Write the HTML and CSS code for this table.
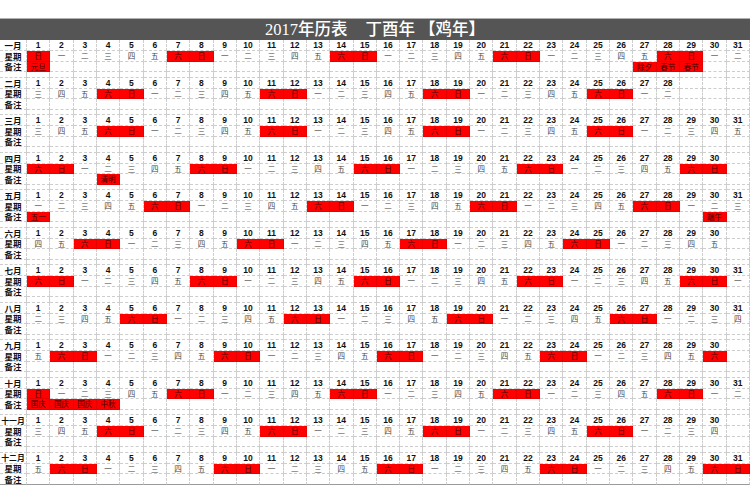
FILE: index.html
```
<!DOCTYPE html>
<html lang="zh">
<head>
<meta charset="utf-8">
<title>2017年历表</title>
<link rel="stylesheet" href="styles.css">
</head>
<body>
<div class="page">
  <div class="title">2017年历表<span class="sp"></span>丁酉年 【鸡年】</div>
  <div id="cal" class="cal"></div>
</div>
<script src="script.js"></script>
</body>
</html>
```

FILE: styles.css
```
html, body {
  margin: 0;
  padding: 0;
  background: #fff;
}
body {
  width: 750px;
  height: 501px;
  overflow: hidden;
  font-family: "Liberation Sans", "Noto Sans CJK SC", sans-serif;
}
.page {
  padding-top: 18px;
}
.title {
  height: 21px;
  border-top: 1px solid #b0b0b0;
  background: #555555;
  color: #fff;
  text-align: center;
  font-family: "Liberation Serif", "Noto Sans CJK SC", serif;
  font-size: 16.5px;
  font-weight: 500;
  line-height: 21px;
}
.title .sp {
  display: inline-block;
  width: 18px;
}
.month, .gap {
  display: grid;
  grid-template-columns: 27px repeat(31, 1fr);
}
.month {
  grid-template-rows: 11px 10.5px 10.5px;
}
.gap {
  grid-template-rows: 5.5px;
}
.c {
  box-sizing: border-box;
  border-right: 1px dashed #cdcdcd;
  border-bottom: 1px dashed #cdcdcd;
  display: flex;
  align-items: center;
  justify-content: center;
  overflow: hidden;
  white-space: nowrap;
}
.lab {
  font-family: "Noto Sans CJK SC", sans-serif;
  font-weight: 700;
  font-size: 8.5px;
  color: #111;
}
.lab.m3 {
  font-size: 7.8px;
}
.num {
  font-weight: 700;
  font-size: 8.5px;
  color: #111;
}
.wd, .note {
  font-family: "Noto Sans CJK SC", sans-serif;
  font-size: 7.5px;
  color: #444;
}
.red {
  background: #ff0000;
  color: #3a0000;
  border-right: 1px solid #e80000;
  border-bottom: 1px solid #e80000;
}
.month:last-child .c:nth-last-child(-n+32) {
  border-bottom: 1px solid #9a9a9a;
}
```

FILE: script.js
```
(function () {
  var starts = [0, 3, 3, 6, 1, 4, 6, 2, 5, 0, 3, 5];
  var days = [31, 28, 31, 30, 31, 30, 31, 31, 30, 31, 30, 31];
  var names = ['一月', '二月', '三月', '四月', '五月', '六月', '七月', '八月', '九月', '十月', '十一月', '十二月'];
  var wk = ['日', '一', '二', '三', '四', '五', '六'];
  var notes = {
    '0-1': '元旦', '0-27': '除夕', '0-28': '春节', '0-29': '春节',
    '3-4': '清明', '4-1': '五一', '4-30': '端午',
    '9-1': '国庆', '9-2': '国庆', '9-3': '国庆', '9-4': '中秋'
  };
  var html = '';
  for (var m = 0; m < 12; m++) {
    if (m > 0) {
      html += '<div class="gap">';
      for (var g = 0; g < 32; g++) html += '<div class="c"></div>';
      html += '</div>';
    }
    var r1 = '<div class="c lab' + (names[m].length > 2 ? ' m3' : '') + '">' + names[m] + '</div>';
    var r2 = '<div class="c lab">星期</div>';
    var r3 = '<div class="c lab">备注</div>';
    for (var d = 1; d <= 31; d++) {
      if (d <= days[m]) {
        var w = (starts[m] + d - 1) % 7;
        var we = (w === 0 || w === 6);
        r1 += '<div class="c num">' + d + '</div>';
        r2 += '<div class="c wd' + (we ? ' red' : '') + '">' + wk[w] + '</div>';
        var n = notes[m + '-' + d];
        r3 += n ? '<div class="c note red">' + n + '</div>' : '<div class="c"></div>';
      } else {
        r1 += '<div class="c"></div>';
        r2 += '<div class="c"></div>';
        r3 += '<div class="c"></div>';
      }
    }
    html += '<div class="month">' + r1 + r2 + r3 + '</div>';
  }
  document.getElementById('cal').innerHTML = html;
})();
```
